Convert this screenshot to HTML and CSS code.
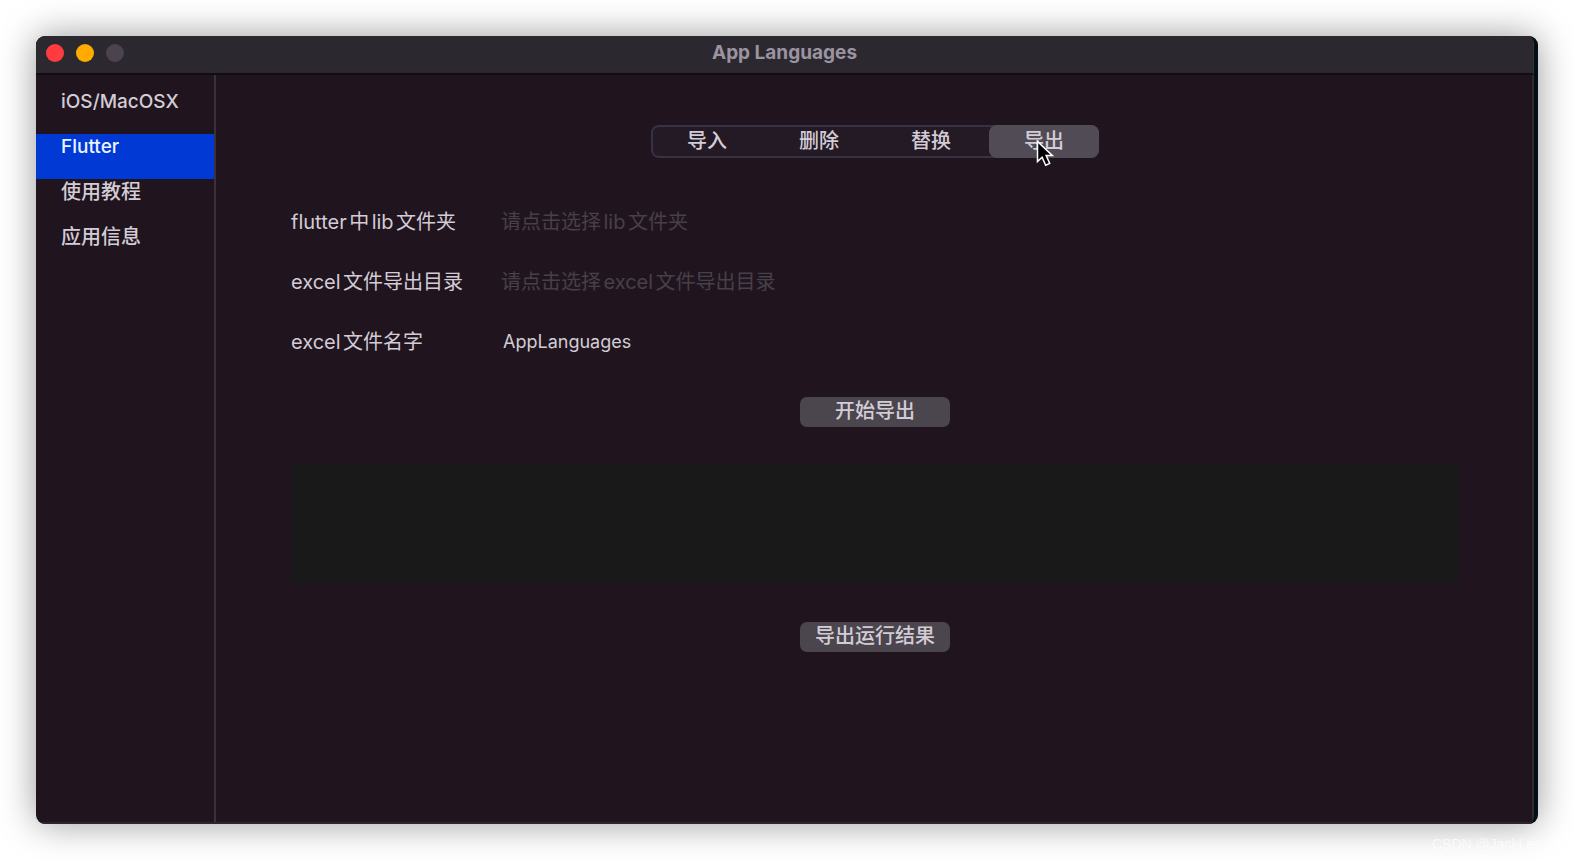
FILE: index.html
```html
<!DOCTYPE html>
<html lang="zh-CN">
<head>
    <meta charset="UTF-8">
    <meta name="viewport" content="width=device-width, initial-scale=1.0">
    <title>App Languages</title>
    <link rel="stylesheet" href="styles.css">
</head>
<body>
    <div class="window">
        <header class="titlebar">
            <div class="lights">
                <button type="button" class="light close" aria-label="关闭"></button>
                <button type="button" class="light minimize" aria-label="最小化"></button>
                <button type="button" class="light zoom" aria-label="缩放" disabled></button>
            </div>
            <h1>App Languages</h1>
        </header>
        <div class="body">
            <nav class="sidebar">
                <a href="#ios" class="latin">iOS/MacOSX</a>
                <a href="#flutter" class="latin active">Flutter</a>
                <a href="#guide">使用教程</a>
                <a href="#about">应用信息</a>
            </nav>
            <main class="content">
                <div class="segments">
                    <button type="button">导入</button>
                    <button type="button">删除</button>
                    <button type="button">替换</button>
                    <button type="button" class="selected">导出
                        <svg class="cursor" width="18" height="27" viewBox="0 0 18 27" aria-hidden="true">
                            <path d="M1.5 1.5v20l4.6-4.3 3.6 8 4-1.8-3.5-7.8h6.3z" fill="#000" stroke="#fff" stroke-width="1.5"/>
                        </svg>
                    </button>
                </div>
                <form class="fields">
                    <div class="form-group">
                        <label for="lib">flutter中lib文件夹</label>
                        <input type="text" id="lib" placeholder="请点击选择lib文件夹">
                    </div>
                    <div class="form-group">
                        <label for="output">excel文件导出目录</label>
                        <input type="text" id="output" placeholder="请点击选择excel文件导出目录">
                    </div>
                    <div class="form-group">
                        <label for="filename">excel文件名字</label>
                        <input type="text" id="filename" class="name" value="AppLanguages">
                    </div>
                </form>
                <button type="button" class="action">开始导出</button>
                <textarea class="log" aria-label="运行结果" readonly></textarea>
                <button type="button" class="action">导出运行结果</button>
            </main>
        </div>
    </div>
    <div class="watermark">CSDN @JackLee18</div>
</body>
</html>
```

FILE: styles.css
```css
* {
    box-sizing: border-box;
}
body {
    margin: 0;
    padding: 36px;
    min-height: 100vh;
    display: flex;
    background-color: #fff;
    color: #d3ccd6;
    font-family: Inter, "Noto Sans CJK SC", sans-serif;
    font-size: 20px;
    font-weight: 500;
    line-height: 26px;
    overflow: hidden;
}
button,
input,
textarea {
    font: inherit;
    color: inherit;
    border: none;
    padding: 0;
}
.window {
    flex: 1;
    display: flex;
    flex-direction: column;
    background-color: #20151e;
    border-right: 4px solid #020f14;
    border-radius: 9px;
    box-shadow: 0 0 36px rgba(0, 0, 0, 0.4);
    overflow: hidden;
}
.titlebar {
    display: grid;
    grid-template-columns: 1fr auto 1fr;
    align-items: center;
    height: 39px;
    padding: 0 10px 4px;
    background-color: #2b292f;
    border-bottom: 2px solid #120c12;
    border-right: 1px solid #39343b;
}
.titlebar h1 {
    margin: 0;
    font-size: 19px;
    font-weight: 700;
    color: #9c93a1;
}
.lights {
    display: flex;
    gap: 12px;
}
.light {
    width: 18px;
    height: 18px;
    border-radius: 50%;
}
.close {
    background-color: #ff3b40;
}
.minimize {
    background-color: #ffab00;
}
.zoom {
    background-color: #4b434e;
}
.body {
    flex: 1;
    display: flex;
    border-right: 2px solid #2f2a31;
    border-bottom: 2px solid #2b2431;
}
.sidebar {
    width: 180px;
    padding-top: 14px;
    border-right: 2px solid #3b313b;
}
.sidebar a {
    display: block;
    height: 45px;
    padding-left: 25px;
    color: inherit;
    text-decoration: none;
}
.sidebar .latin {
    font-size: 19px;
}
.sidebar .active {
    background-color: #0039d3;
    color: #eaf3ff;
}
.content {
    flex: 1;
    display: flex;
    flex-direction: column;
    align-items: center;
    padding: 50px 73px 0 75px;
}
.segments {
    display: grid;
    grid-template-columns: repeat(4, 112px);
    height: 33px;
    border-radius: 8px;
    background-color: #231a25;
    box-shadow: inset 0 0 0 2px #373141;
}
.segments button {
    position: relative;
    padding-bottom: 2px;
    background: none;
}
.segments .selected {
    margin-left: 2px;
    background-color: #504b54;
    border-radius: 8px;
}
.cursor {
    position: absolute;
    left: 47px;
    top: 15px;
}
.fields {
    align-self: stretch;
    display: flex;
    flex-direction: column;
    gap: 20px;
    margin-top: 44px;
}
.form-group {
    display: grid;
    grid-template-columns: 210px 1fr;
    height: 40px;
    align-items: center;
    font-weight: 400;
    text-autospace: normal;
}
.form-group input {
    height: 30px;
    background: none;
}
.form-group .name {
    padding: 0 0 2px 2px;
    font-size: 18px;
}
.form-group input::placeholder {
    color: #474049;
    opacity: 1;
}
.action {
    width: 150px;
    height: 30px;
    margin: 35px 0 37px;
    padding-bottom: 2px;
    border-radius: 7px;
    background-color: #4b454e;
}
.log {
    align-self: stretch;
    height: 120px;
    margin-bottom: 3px;
    background-color: #191919;
    resize: none;
}
.watermark {
    position: absolute;
    left: 1432px;
    bottom: 7px;
    font-family: "Liberation Sans", Arial, sans-serif;
    font-size: 14px;
    font-weight: 400;
    line-height: 18px;
    color: rgba(255, 255, 255, 0.7);
}
```
